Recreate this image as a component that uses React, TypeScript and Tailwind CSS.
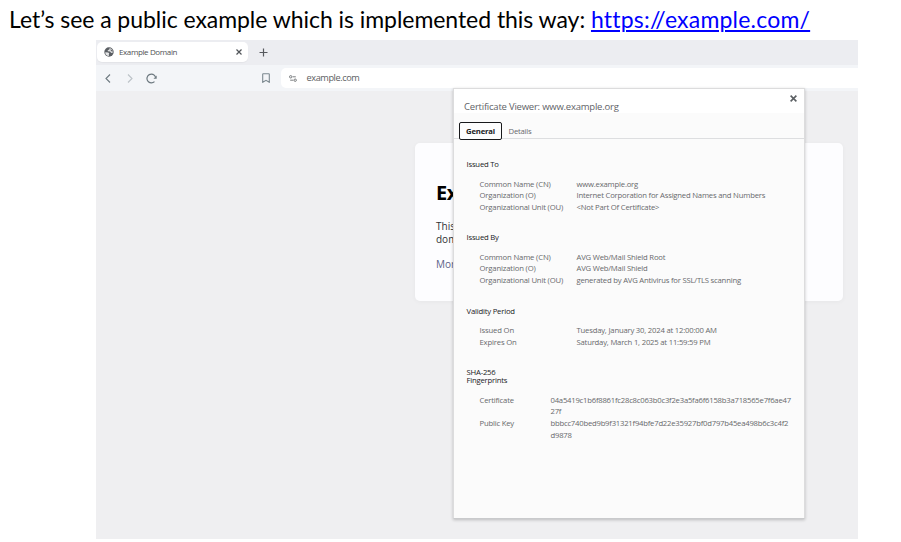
type Row = { label: string; value: string };

const issuedTo: Row[] = [
  { label: "Common Name (CN)", value: "www.example.org" },
  { label: "Organization (O)", value: "Internet Corporation for Assigned Names and Numbers" },
  { label: "Organizational Unit (OU)", value: "<Not Part Of Certificate>" },
];
const issuedBy: Row[] = [
  { label: "Common Name (CN)", value: "AVG Web/Mail Shield Root" },
  { label: "Organization (O)", value: "AVG Web/Mail Shield" },
  { label: "Organizational Unit (OU)", value: "generated by AVG Antivirus for SSL/TLS scanning" },
];
const validity: Row[] = [
  { label: "Issued On", value: "Tuesday, January 30, 2024 at 12:00:00 AM" },
  { label: "Expires On", value: "Saturday, March 1, 2025 at 11:59:59 PM" },
];

function Section({ title, rows }: { title: string; rows: Row[] }) {
  return (
    <section>
      <h3 className="h-[14px] leading-[14px] text-[#202124]">{title}</h3>
      <dl className="mt-[7.5px] mb-[-0.5px] pl-[13px]">
        {rows.map((r) => (
          <div key={r.label} className="flex h-[11.5px] items-center whitespace-nowrap leading-[11px]">
            <dt className="w-[97px] shrink-0 tracking-[-0.16px]">{r.label}</dt>
            <dd>{r.value}</dd>
          </div>
        ))}
      </dl>
    </section>
  );
}

function Fingerprint({ label, lines }: { label: string; lines: string[] }) {
  return (
    <div className="flex leading-[11.7px]">
      <dt className="w-[71px] shrink-0">{label}</dt>
      <dd className="whitespace-nowrap tracking-[-0.22px]">
        {lines.map((l) => (
          <div key={l}>{l}</div>
        ))}
      </dd>
    </div>
  );
}

function CertificateViewer() {
  return (
    <div className="absolute left-[357px] top-[48px] flex h-[431px] w-[352px] flex-col border border-[#dcdcdd] border-b-[#c9cacc] bg-[#fbfbfb] text-[7.7px] tracking-[-0.2px] text-[#68696c] shadow-[0_1px_3px_rgba(0,0,0,0.22)]">
      <header className="flex h-[24px] shrink-0 items-start justify-between bg-white pl-[10px] pr-[7px]">
        <h2 className="mt-[10px] text-[9.5px] leading-[16px] tracking-[-0.22px] text-[#5f6368]">Certificate Viewer: www.example.org</h2>
        <svg className="mt-[6px] size-[7px]" viewBox="0 0 8 8" fill="none" stroke="#5b5f63" strokeWidth="1.8">
          <path d="M.7.7l6.600 6.600M7.300.700L.700 7.300" />
        </svg>
      </header>
      <nav className="flex h-[26px] shrink-0 items-end border-b border-[#dddee0] pl-[5px]">
        <div className="-mb-[2px] flex h-[18px] w-[43px] items-center justify-center rounded-[2px] border-[1.5px] border-[#18191b] bg-[#fdfdfd] font-bold leading-[12px] text-[#202124]">
          General
        </div>
        <div className="ml-[6.5px] flex h-[14px] items-center leading-[12px]">Details</div>
      </nav>
      <div className="pl-[12.5px] pt-[18px]">
        <Section title="Issued To" rows={issuedTo} />
        <div className="h-[17.5px]" />
        <Section title="Issued By" rows={issuedBy} />
        <div className="h-[18px]" />
        <Section title="Validity Period" rows={validity} />
        <h3 className="mt-[20px] w-[50px] leading-[8px] text-[#202124]">SHA-256 Fingerprints</h3>
        <dl className="mt-[11px] pl-[13px]">
          <Fingerprint label="Certificate" lines={["04a5419c1b6f8861fc28c8c063b0c3f2e3a5fa6f6158b3a718565e7f6ae47", "27f"]} />
          <Fingerprint label="Public Key" lines={["bbbcc740bed9b9f31321f94bfe7d22e35927bf0d797b45ea498b6c3c4f2", "d9878"]} />
        </dl>
      </div>
    </div>
  );
}

function TabStrip() {
  return (
    <div className="flex h-[25px] items-start bg-[#ecedf1] pl-px pt-[2px]">
      <div className="flex h-[20px] w-[151px] items-center rounded-[5px] bg-white pl-[7px] pr-[6px] shadow-[0_1px_1px_rgba(0,0,0,0.04)]">
        <svg className="size-[10px]" viewBox="0 0 20 20">
          <circle cx="10" cy="10" r="9.4" fill="#5a5e63" />
          <path d="M2.500 10.500l6 .5 2 2-1 2.500.500 2.500C5.500 18 2.300 14.500 2.500 10.500Z" fill="#fff" fillOpacity=".85" />
          <path d="M11.500 2.200l-1 2.800-3 1.500 0 2.200 4.500.300 2.500 3 3-.500C18 7.500 15.500 3.500 11.500 2.200Z" fill="#fff" fillOpacity=".8" />
          <path d="M12.500 4.500l3.500 2 1 3-3-1.500Z" fill="#5a5e63" />
        </svg>
        <span className="ml-[5px] text-[8px] leading-[12px] tracking-[-0.38px] text-[#505255]">Example Domain</span>
        <svg className="ml-auto size-[6px]" viewBox="0 0 6 6" fill="none" stroke="#505459" strokeWidth="1.2">
          <path d="M.5.5l5 5M5.500.500l-5 5" />
        </svg>
      </div>
      <svg className="ml-[11px] mt-[6px] size-[9px]" viewBox="0 0 9 9" fill="none" stroke="#56595e" strokeWidth="1.2">
        <path d="M4.500.500v8M.500 4.500h8" />
      </svg>
    </div>
  );
}

function Toolbar() {
  return (
    <div className="flex h-[26px] items-center bg-[#f3f5f8] pl-[9px]">
      <svg className="h-[9px] w-[6px]" viewBox="0 0 6 9" fill="none" stroke="#6c787f" strokeWidth="1.1">
        <path d="M5 .5l-4 4 4 4" />
      </svg>
      <svg className="ml-[16px] h-[9px] w-[6px]" viewBox="0 0 6 9" fill="none" stroke="#bcc2c7" strokeWidth="1.1">
        <path d="M1 .500l4 4-4 4" />
      </svg>
      <svg className="ml-[13px] size-[11px]" viewBox="0 0 11 11" fill="none" stroke="#6c787f" strokeWidth="1.2">
        <path d="M8.500 8.600A4.400 4.400 0 1 1 9.500 4" />
        <path d="M10.700 2.500v3.200H7.500z" fill="#6c787f" stroke="none" />
      </svg>
      <svg className="ml-[105px] h-[10px] w-[8px]" viewBox="0 0 8 10" fill="none" stroke="#7c8990" strokeWidth="1.1">
        <path d="M1.200.700h5.600q.500 0 .500.500v8.100L4 7.300.700 9.300V1.200q0-.500.500-.500z" />
      </svg>
      <div className="ml-[11px] flex h-[20px] flex-1 items-center rounded-l-[5px] bg-white pl-[8px]">
        <svg className="h-[7px] w-[8px]" viewBox="0 0 8 7" fill="none" stroke="#6c6f73" strokeWidth=".9">
          <circle cx="1.700" cy="1.800" r="1.200" />
          <path d="M3.700 1.800h3.100M1.200 5.200h3.100" />
          <circle cx="6.200" cy="5.200" r="1.200" />
        </svg>
        <span className="ml-[9.5px] text-[9.2px] leading-[14px] tracking-[-0.42px] text-[#5c5e62]">example.com</span>
      </div>
    </div>
  );
}

export default function App() {
  return (
    <main className="h-[542px] w-[901px] overflow-hidden bg-white font-['Open_Sans','Noto_Sans',sans-serif]">
      <h1 className="flex h-[40px] items-start whitespace-pre pl-[9px] pt-[4px] font-['Lato',sans-serif] text-[23px] leading-[30px] text-black">
        <span className="tracking-[-0.05px]">Let’s see a public example which is implemented this way: </span>
        <a className="tracking-[0.2px] text-[#0000ff] underline decoration-2 underline-offset-2">https://example.com/</a>
      </h1>
      <div className="relative ml-[96px] flex h-[499px] w-[762px] flex-col bg-[#efeff1]">
        <TabStrip />
        <Toolbar />
        <article className="ml-[319px] mt-[52px] h-[158px] w-[428px] rounded-[5px] bg-[#fdfdff] pl-[21px] pt-[36px] text-[10px] text-[#303034] shadow-[0_1px_5px_rgba(0,0,0,0.04)]">
          <h2 className="text-[20px] font-bold leading-[28px] tracking-[-0.5px] text-black">Example Domain</h2>
          <p className="mt-[12.5px] w-[390px] leading-[13.5px]">
            This domain is for use in illustrative examples in documents. You may use this
            <br />
            domain in literature without prior coordination or asking for permission.
          </p>
          <a className="mt-[10px] block leading-[14px] text-[#5c6289]">More information...</a>
        </article>
        <CertificateViewer />
      </div>
    </main>
  );
}
